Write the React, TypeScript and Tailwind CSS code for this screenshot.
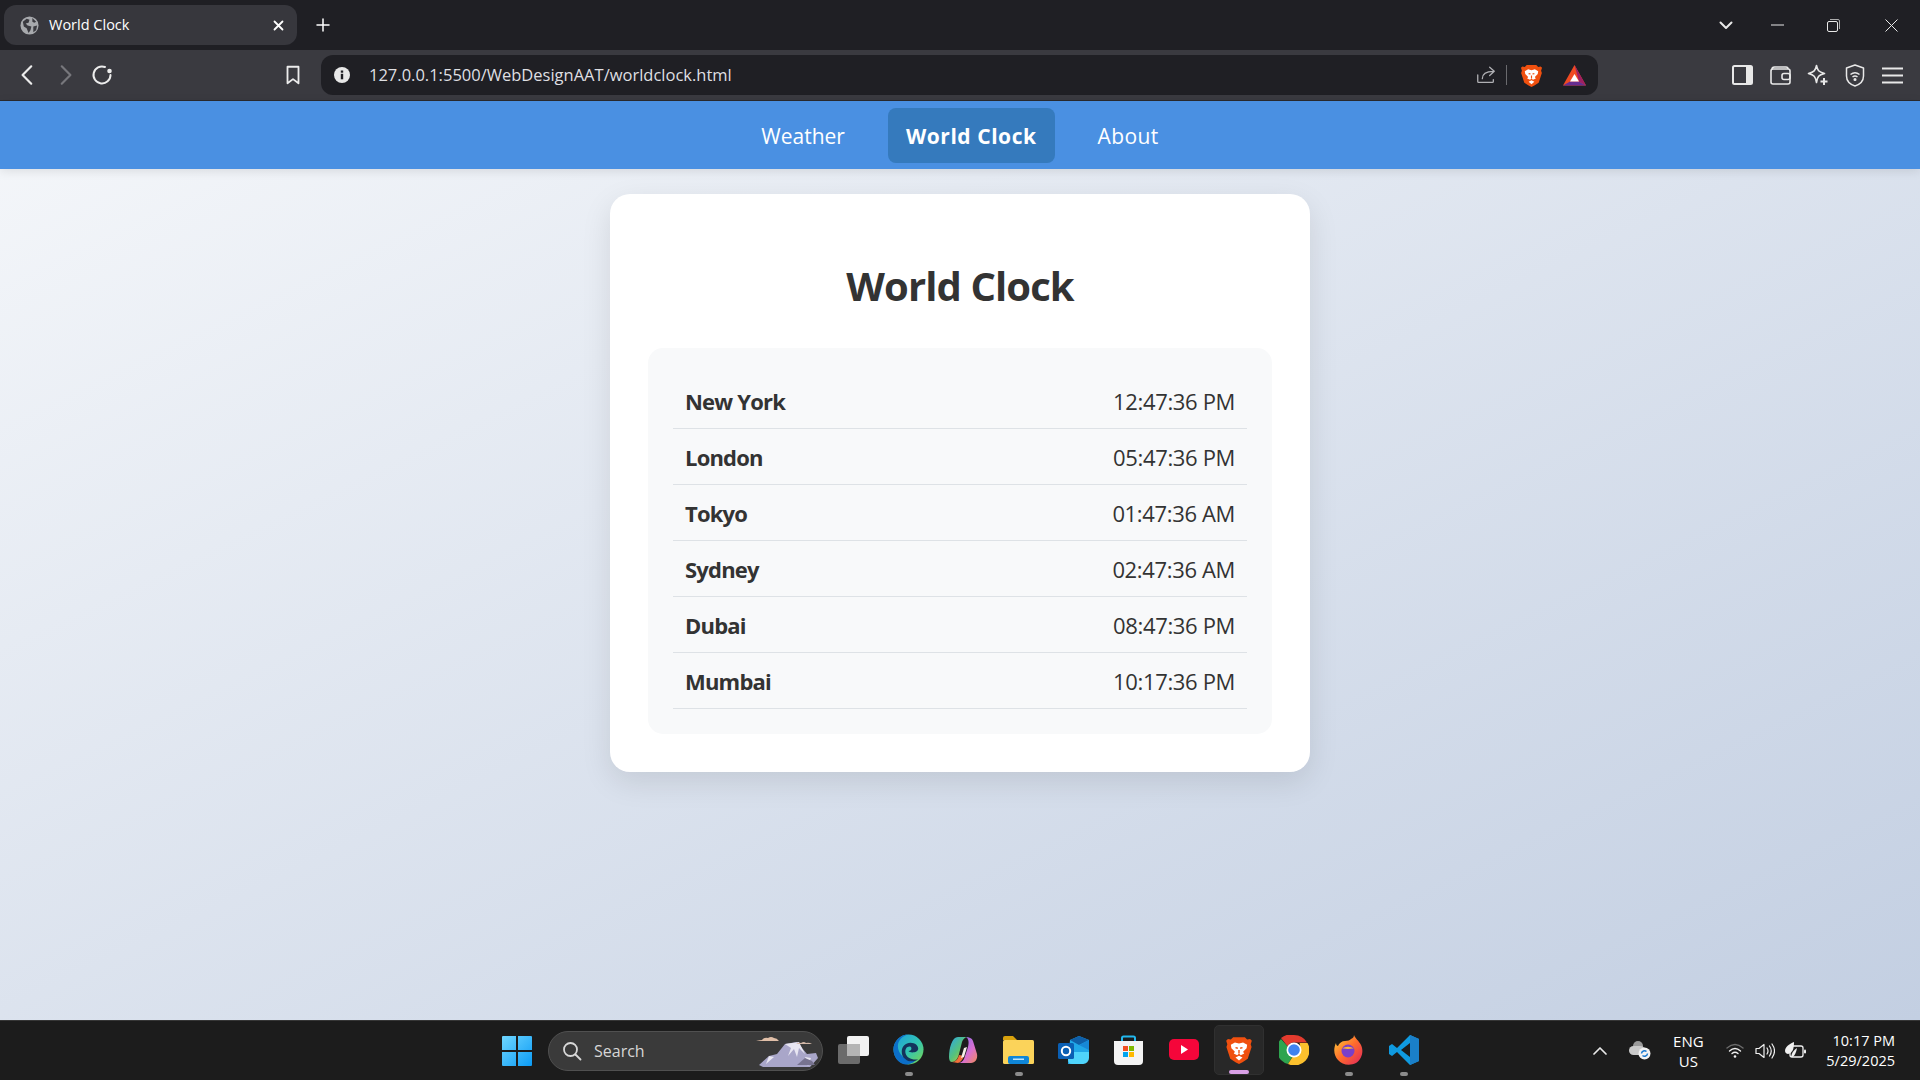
const clocks = [
  { city: "New York", time: "12:47:36 PM" },
  { city: "London", time: "05:47:36 PM" },
  { city: "Tokyo", time: "01:47:36 AM" },
  { city: "Sydney", time: "02:47:36 AM" },
  { city: "Dubai", time: "08:47:36 PM" },
  { city: "Mumbai", time: "10:17:36 PM" },
];

const ui = "font-['Open_Sans',sans-serif]";

function Line({ size = 20, children, className = "" }: { size?: number; children: React.ReactNode; className?: string }) {
  return (
    <svg width={size} height={size} viewBox="0 0 24 24" fill="none" stroke="currentColor" strokeWidth="2" strokeLinecap="round" strokeLinejoin="round" className={className}>
      {children}
    </svg>
  );
}

function BraveLogo({ size = 24 }: { size?: number }) {
  return (
    <svg width={size} height={size} viewBox="0 0 24 24">
      <path d="M7 1h10l2 2 2.500-.5L23 4l-1 3 .8 2.500-3.300 10L15 22.500 12 24l-3-1.500L4.500 19.500 1.200 9.500 2 7 1 4l1.500-1.500L5 3z" fill="#f0500f" />
      <path d="M5 7.500 8.500 5.500 12 6.500l3.500-1L19 7.500l-.5 3-3 3 1 1.500-3 1.500L12 15l-1.500 1.500-3-1.500 1-1.500-3-3z" fill="#fff" />
      <path d="M9 10l2 .5M15 10l-2 .5M12 12v3" stroke="#f0500f" strokeWidth="1.200" />
      <path d="M9 18.500 12 17l3 1.500-3 2.500z" fill="#fff" />
    </svg>
  );
}

function SearchMountains() {
  return (
    <svg width="64" height="32" viewBox="0 0 64 32" className="mr-[3px]">
      <path d="M4 30 14 21l8-2L30 9l12-2 10 12 9-1 2 5-8 9H8z" fill="#a9a6c9" />
      <path d="M30 9l6 4-3 8 6-7 3 8 2-9 6 6-6-12zM14 21l5 1-8 7zM50 22l6 1-3 8z" fill="#e8e6f2" />
      <path d="M42 30l8-7 7 3 3 4z" fill="#77738f" />
      <path d="M1 6q4-1 6-1 2-3 6-2 3-2 6 0 3 0 5 3H1z" fill="#e0bfa8" />
      <path d="M41 9q3-2 5-1 3-2 5 0 3-1 6 1z" fill="#d3b8a8" />
    </svg>
  );
}

function ChromeTile({ children, dot = false }: { children: React.ReactNode; dot?: boolean }) {
  return (
    <div className="relative flex h-[50px] w-[55px] items-center justify-center">
      {children}
      {dot && <span className="absolute bottom-[-1px] h-[4px] w-[8px] rounded-full bg-[#8c8c8c]" />}
    </div>
  );
}

export default function App() {
  return (
    <div className={`${ui} flex h-screen w-full flex-col overflow-hidden bg-[#1c1c1c]`}>
      {/* tab strip */}
      <div className="flex h-[50px] shrink-0 items-center bg-[#1f1f24] pl-[4px] text-white">
        <div className="flex h-[40px] w-[293px] items-center rounded-[12px] bg-[#37373d] pl-[16px] pr-[13px]">
          <svg width="19" height="19" viewBox="0 0 20 20">
            <circle cx="10" cy="10" r="9.500" fill="#a7a9ad" />
            <path d="M3 6l4-3 3 1-1 3-3 1 2 2 4 1-1 4-2 3-2-5-3-2zM13 2l4 4-2 1-2-1zM14 11l4-1-1 5-3 2z" fill="#3a3a40" />
          </svg>
          <span className="ml-[10px] flex-1 text-[14.5px]">World Clock</span>
          <svg width="11" height="11" viewBox="0 0 11 11" stroke="#fff" strokeWidth="1.800" strokeLinecap="round">
            <path d="M1.500 1.500l8 8M9.500 1.500l-8 8" />
          </svg>
        </div>
        <svg width="14" height="14" viewBox="0 0 14 14" stroke="#fff" strokeWidth="1.500" strokeLinecap="round" className="ml-[19px]">
          <path d="M7 1v12M1 7h12" />
        </svg>
        <div className="ml-auto flex items-center text-[#e8e8e8]">
          <svg width="14" height="9" viewBox="0 0 14 9" fill="none" stroke="currentColor" strokeWidth="2" strokeLinecap="round" strokeLinejoin="round" className="mr-[38px]">
            <path d="M1.500 1.500 7 7l5.500-5.500" />
          </svg>
          <svg width="13" height="2" viewBox="0 0 13 2" stroke="currentColor" className="mr-[43px]"><path d="M0 1h13" /></svg>
          <svg width="13" height="13" viewBox="0 0 13 13" fill="none" stroke="currentColor" className="mr-[45px]">
            <rect x=".5" y="2.500" width="10" height="10" rx="1.500" />
            <path d="M3 .5h8a1.500 1.500 0 0 1 1.500 1.500v8" opacity=".7" />
          </svg>
          <svg width="13" height="13" viewBox="0 0 13 13" stroke="currentColor" className="mr-[22px]"><path d="M.5.5l12 12M12.500.5l-12 12" /></svg>
        </div>
      </div>

      {/* toolbar */}
      <div className="flex h-[51px] shrink-0 items-center border-b border-[#2a2a2e] bg-[#3a3a40] text-[#ececec]">
        <Line size={26} className="ml-[15px]"><path d="M15 4 7 12l8 8" /></Line>
        <Line size={26} className="ml-[11px] text-[#77777c]"><path d="M9 4l8 8-8 8" /></Line>
        <Line size={24} className="ml-[12px]">
          <path d="M20.500 12A8.500 8.500 0 1 1 15 4" />
          <circle cx="19.500" cy="8" r="1.300" fill="currentColor" />
        </Line>
        <Line size={22} className="ml-[168px]" ><path d="M6 3h12v18l-6-4.500L6 21z" /></Line>
        <div className="ml-[17px] flex h-[40px] w-[1277px] items-center rounded-[12px] bg-[#1f1f24] pl-[13px] pr-[12px]">
          <svg width="16" height="16" viewBox="0 0 16 16">
            <circle cx="8" cy="8" r="8" fill="#e8e8e8" />
            <rect x="6.800" y="6.800" width="2.400" height="5.500" fill="#1f1f24" />
            <rect x="6.800" y="3.500" width="2.400" height="2.200" fill="#1f1f24" />
          </svg>
          <span className="ml-[19px] pt-[1px] text-[16.5px] text-[#dfdfe2]">127.0.0.1:5500/WebDesignAAT/worldclock.html</span>
          <div className="ml-auto flex items-center">
            <Line size={22} className="text-[#b0b0b4]">
              <path d="M3 12v7a1 1 0 0 0 1 1h15a1 1 0 0 0 1-1v-2" strokeWidth="1.400" />
              <path d="M8 16c0-5 4-8 12-8M16 3.500 21 8l-5 4.500" strokeWidth="1.400" />
            </Line>
            <span className="ml-[9px] h-[20px] w-px bg-[#6a6a6e]" />
            <span className="ml-[13px]"><BraveLogo size={23} /></span>
            <svg width="23" height="21" viewBox="0 0 23 21" className="ml-[20px]">
              <path d="M11.500 0 23 20.500H0z" fill="#f04a22" />
              <path d="M11.500 0 23 20.500l-7-4z" fill="#9e1f63" />
              <path d="M0 20.500h23l-7-4H7z" fill="#662d91" />
              <path d="M11.500 9 16 16.500H7z" fill="#fff" />
            </svg>
          </div>
        </div>
        <div className="ml-[134px] flex items-center">
          <svg width="21" height="20" viewBox="0 0 21 20" fill="none" stroke="#e8e8e8" strokeWidth="2">
            <rect x="1" y="1" width="19" height="18" rx="1.500" />
            <rect x="14" y="2" width="5" height="16" fill="#e8e8e8" stroke="none" />
          </svg>
          <svg width="21" height="20" viewBox="0 0 21 20" fill="none" stroke="#e8e8e8" strokeWidth="1.600" className="ml-[17px]">
            <path d="M2 4.500A2.500 2.500 0 0 1 4.500 2H16a2 2 0 0 1 2 2" />
            <rect x="1" y="4" width="19" height="15" rx="2" />
            <rect x="12" y="8.500" width="8" height="6" rx="2" />
          </svg>
          <svg width="22" height="22" viewBox="0 0 22 22" fill="none" stroke="#e8e8e8" strokeWidth="1.600" className="ml-[16px]">
            <path d="M9.500 1.500c1 5 2 6.500 8 8-6 1.500-7 3-8 9-1-6-2.500-7.500-8-9 5.500-1.500 7-3 8-8z" strokeLinejoin="round" />
            <path d="M17 14v7M13.500 17.500h7" strokeWidth="2" />
          </svg>
          <svg width="20" height="23" viewBox="0 0 20 23" fill="none" stroke="#e8e8e8" strokeWidth="1.500" className="ml-[16px]">
            <path d="M10 1l8.500 3v8c0 5-4 8.500-8.500 10C5.500 20.500 1.500 17 1.500 12V4z" strokeLinejoin="round" />
            <path d="M5.500 10.500q4.500-3.500 9 0M7.500 13q2.500-2 5 0" />
            <circle cx="10" cy="15.500" r=".8" fill="#e8e8e8" />
          </svg>
          <svg width="21" height="17" viewBox="0 0 21 17" stroke="#e8e8e8" strokeWidth="1.800" className="ml-[17px]">
            <path d="M0 1.500h21M0 8.500h21M0 15.500h21" />
          </svg>
        </div>
      </div>

      {/* page */}
      <div className="flex min-h-0 flex-1 flex-col bg-gradient-to-br from-[#f5f7fa] to-[#c3cfe2] font-['Open_Sans',sans-serif]">
        <nav className="flex h-[68px] shrink-0 items-center justify-center gap-[25px] bg-[#4a90e2] text-[21px] text-white shadow-[0_2px_10px_rgba(0,0,0,0.1)]">
          <a className="flex h-[55px] items-center rounded-[8px] px-[18px] pt-[3px]">Weather</a>
          <a className="flex h-[55px] items-center rounded-[8px] bg-[#357abd] px-[18px] pt-[3px] font-bold tracking-[0.55px]">World Clock</a>
          <a className="flex h-[55px] items-center rounded-[8px] px-[18px] pt-[3px] tracking-[0.4px]">About</a>
        </nav>
        <main className="flex justify-center pt-[25px]">
          <section className="w-[700px] rounded-[20px] bg-white px-[38px] pb-[38px] pt-[64px] shadow-[0_10px_30px_rgba(0,0,0,0.1)]">
            <h1 className="mb-[34px] text-center text-[40px] leading-[56px] font-bold tracking-[-0.9px] text-[#333333]">World Clock</h1>
            <div className="rounded-[15px] bg-[#f8f9fa] p-[25px]">
              {clocks.map((c) => (
                <div key={c.city} className="flex h-[56px] items-center justify-between border-b border-[#dee2e6] px-[12px] pt-[1px] text-[22px] text-[#333333]">
                  <span className="font-bold tracking-[-0.8px]">{c.city}</span>
                  <span className="tracking-[-0.35px]">{c.time}</span>
                </div>
              ))}
            </div>
          </section>
        </main>
      </div>

      {/* taskbar */}
      <div className="flex h-[60px] shrink-0 items-center border-t border-[#363636] bg-[#1c1c1c] text-white">
        <svg width="30" height="30" viewBox="0 0 30 30" className="ml-[502px]">
          <defs>
            <linearGradient id="win" x1="0" y1="0" x2="1" y2="1">
              <stop offset="0" stopColor="#6fd6ff" />
              <stop offset="1" stopColor="#0b9bf5" />
            </linearGradient>
          </defs>
          <path d="M0 1a1 1 0 0 1 1-1h13v14H0zM16 0h13a1 1 0 0 1 1 1v13H16zM0 16h14v14H1a1 1 0 0 1-1-1zM16 16h14v13a1 1 0 0 1-1 1H16z" fill="url(#win)" />
        </svg>
        <div className="ml-[16px] flex h-[40px] w-[275px] items-center justify-between rounded-full border border-[#505050] bg-[#3a3a3a] pl-[13px]">
          <div className="flex items-center">
            <svg width="20" height="20" viewBox="0 0 20 20" fill="none" stroke="#d8d8d8" strokeWidth="1.800" strokeLinecap="round">
              <circle cx="8.500" cy="8.500" r="6.500" />
              <path d="M13.500 13.500 18.500 18.500" />
            </svg>
            <span className="ml-[12px] text-[16px] text-[#d6d6d6]">Search</span>
          </div>
          <SearchMountains />
        </div>
        <div className="ml-[3px] flex items-center pb-[2px]">
          <ChromeTile>
            <svg width="31" height="28" viewBox="0 0 31 28">
              <rect x="0" y="8" width="22" height="20" rx="2" fill="#6b6b6b" />
              <rect x="9" y="0" width="22" height="20" rx="2" fill="#f2f2f2" />
              <rect x="9" y="8" width="13" height="12" fill="#b4b4b4" />
            </svg>
          </ChromeTile>
          <ChromeTile dot>
            <svg width="31" height="31" viewBox="0 0 32 32">
              <defs>
                <linearGradient id="edge" x1="0" y1="0" x2="1" y2="1">
                  <stop offset="0" stopColor="#1b9de2" />
                  <stop offset=".55" stopColor="#33c6b0" />
                  <stop offset="1" stopColor="#7fd64a" />
                </linearGradient>
              </defs>
              <circle cx="16" cy="16" r="15.500" fill="url(#edge)" />
              <path d="M.5 16C.5 7 8 .5 16 .5c-6 1-11 6-11 12 0 8 7 15 18 15-3 2.500-6 4-10 4C6 31 .5 24 .5 16z" fill="#0c6fc9" />
              <path d="M9 18c0-5 4-9 9-9 5 0 8 3 8 6 0 3-3 4-6 4-2 0-3-.5-4-1.500 2 0 3-1 3-2.500 0-1.500-1-2-2-2-3 0-5 3-4 7 1 4 6 7 13 6-4 3-10 3-13 0-3-2-4-5-4-8z" fill="#14335c" />
            </svg>
          </ChromeTile>
          <ChromeTile>
            <svg width="29" height="27" viewBox="0 0 29 27">
              <defs>
                <linearGradient id="copA" x1="0" y1="0" x2="1" y2="1">
                  <stop offset="0" stopColor="#2aa7e8" />
                  <stop offset=".5" stopColor="#57c27a" />
                  <stop offset="1" stopColor="#f5c518" />
                </linearGradient>
                <linearGradient id="copB" x1="0" y1="0" x2="1" y2="1">
                  <stop offset="0" stopColor="#7c6df2" />
                  <stop offset=".6" stopColor="#d86fd0" />
                  <stop offset="1" stopColor="#f08a5a" />
                </linearGradient>
              </defs>
              <path d="M9 1h10c-3 0-5 2-6 5l-3 12c-1 4-3 8-7 8-2 0-3-2-3-5C0 12 3 1 9 1z" fill="url(#copA)" />
              <path d="M17 1c3 0 6 1 7 4l4 13c1 5-2 9-6 9H9c4 0 6-3 7-7l3-9c1-4 1-8-2-10z" fill="url(#copB)" />
              <path d="M3 26c4 0 6-3 7-7l5 1c-1 3-3 6-6 7z" fill="#f0703a" />
              <path d="M15 12l3-1-3 10-3 1z" fill="#f3f0e8" />
            </svg>
          </ChromeTile>
          <ChromeTile dot>
            <svg width="31" height="28" viewBox="0 0 31 28">
              <path d="M0 2a2 2 0 0 1 2-2h8l4 4h-14z" fill="#d9a20d" />
              <rect x="0" y="4" width="31" height="24" rx="1.500" fill="#fbd35a" />
              <rect x="5" y="20" width="21" height="8" rx="2" fill="#0f86d8" />
              <rect x="10" y="22.500" width="11" height="1.500" fill="#bfe3fb" />
            </svg>
          </ChromeTile>
          <ChromeTile>
            <svg width="31" height="28" viewBox="0 0 31 28">
              <path d="M12 4 21 0l10 4v16l-6 8H10z" fill="#20a7e8" />
              <path d="M21 0l10 4-10 5-9-5z" fill="#0f5fa8" />
              <path d="M21 9l10-5v10l-10-5z" fill="#1788d6" />
              <path d="M10 16h21v6a6 6 0 0 1-6 6H14a4 4 0 0 1-4-4z" fill="#4fd4fb" />
              <rect x="0" y="7" width="16" height="16" rx="1.500" fill="#0a5fb4" />
              <circle cx="8" cy="15" r="4.200" fill="none" stroke="#fff" strokeWidth="2" />
            </svg>
          </ChromeTile>
          <ChromeTile>
            <svg width="29" height="30" viewBox="0 0 29 30">
              <path d="M8 6V3a1.500 1.500 0 0 1 1.500-1.500h10A1.500 1.500 0 0 1 21 3v3" fill="none" stroke="#22b8ee" strokeWidth="2" />
              <path d="M0 6h29v20a4 4 0 0 1-4 4H4a4 4 0 0 1-4-4z" fill="#f4f4f4" />
              <rect x="9" y="11" width="5" height="5" fill="#f25022" />
              <rect x="15" y="11" width="5" height="5" fill="#7fba00" />
              <rect x="9" y="17" width="5" height="5" fill="#00a4ef" />
              <rect x="15" y="17" width="5" height="5" fill="#ffb900" />
            </svg>
          </ChromeTile>
          <ChromeTile>
            <svg width="30" height="21" viewBox="0 0 30 21">
              <rect width="30" height="21" rx="5" fill="#f5063a" />
              <path d="M12 6l7 4.500-7 4.500z" fill="#fff" />
            </svg>
          </ChromeTile>
          <div className="relative flex h-[50px] w-[50px] mx-[2.500px] items-center justify-center rounded-[5px] border border-[#303030] bg-[#282828]">
            <BraveLogo size={28} />
            <span className="absolute bottom-[0px] h-[4px] w-[20px] rounded-full bg-[#d9a0e6]" />
          </div>
          <ChromeTile>
            <svg width="30" height="30" viewBox="0 0 30 30">
              <path d="M15 0a15 15 0 0 1 13 7.500H15a7.500 7.500 0 0 0-6.500 3.800L2 3A15 15 0 0 1 15 0z" fill="#e33b2e" />
              <path d="M2 4a15 15 0 0 0 7 25l6-10a7.500 7.500 0 0 1-6.500-7.700z" fill="#2ea44f" />
              <path d="M28.500 8A15 15 0 0 1 9 29l7-11a7.500 7.500 0 0 0 4.500-10z" fill="#fbc02d" />
              <circle cx="15" cy="15" r="7.500" fill="#fff" />
              <circle cx="15" cy="15" r="5.800" fill="#3f83f0" />
            </svg>
          </ChromeTile>
          <ChromeTile dot>
            <svg width="29" height="30" viewBox="0 0 29 30">
              <defs>
                <linearGradient id="fx" x1="0" y1="0" x2="1" y2="1">
                  <stop offset="0" stopColor="#ffd43a" />
                  <stop offset=".5" stopColor="#ff6b2c" />
                  <stop offset="1" stopColor="#e0245e" />
                </linearGradient>
              </defs>
              <path d="M20 0c1 3 5 6 7 10 3 6 1 14-5 18-6 3-14 2-18-3C0 21-1 14 2 8c0 2 1 3 2 3 1-3 4-5 7-5 3 0 5-1 6-2 2-1 3-2 3-4z" fill="url(#fx)" />
              <circle cx="14" cy="16" r="6.500" fill="#7a3fc8" />
              <path d="M8 14c3-3 9-3 12 0-2-1-4 0-6 0s-4-1-6 0z" fill="#ffb33a" />
            </svg>
          </ChromeTile>
          <ChromeTile dot>
            <svg width="30" height="30" viewBox="0 0 30 30">
              <path d="M21 0l9 4v22l-9 4L8 17l-5 4-3-2v-8l3-2 5 4z" fill="#0f9ae0" />
              <path d="M21 0l9 4v22l-9 4z" fill="#1a7fc8" />
              <path d="M21 8v14l-9-7z" fill="#1c1c1c" />
            </svg>
          </ChromeTile>
        </div>

        {/* tray */}
        <div className="ml-auto flex items-center pr-[25px]">
          <svg width="14" height="9" viewBox="0 0 14 9" fill="none" stroke="#e8e8e8" strokeWidth="1.700" strokeLinecap="round" strokeLinejoin="round">
            <path d="M1 8l6-6 6 6" />
          </svg>
          <svg width="22" height="19" viewBox="0 0 22 19" className="ml-[22px]">
            <circle cx="9" cy="5" r="5" fill="#9a9a9a" />
            <rect x="0" y="5" width="16" height="9" rx="4.500" fill="#c9c9c9" />
            <circle cx="15.500" cy="12.500" r="6" fill="#f2f2f2" />
            <path d="M12.500 12.500a3 3 0 0 1 5-2M18.500 12.500a3 3 0 0 1-5 2" fill="none" stroke="#1878d0" strokeWidth="1.500" />
          </svg>
          <div className="ml-[13px] flex w-[48px] flex-col items-center text-[15px] leading-[20px]">
            <span>ENG</span>
            <span>US</span>
          </div>
          <svg width="18" height="16" viewBox="0 0 18 16" fill="none" strokeLinecap="round" className="ml-[14px]">
            <path d="M1 5q8-7 16 0" stroke="#6b6b6b" strokeWidth="1.400" />
            <path d="M3.500 8q5.500-5 11 0M6 10.500q3-2.500 6 0" stroke="#f0f0f0" strokeWidth="1.400" />
            <circle cx="9" cy="13.500" r="1.300" fill="#f0f0f0" />
          </svg>
          <svg width="20" height="18" viewBox="0 0 20 18" fill="none" stroke="#f0f0f0" strokeWidth="1.200" className="ml-[11px]">
            <path d="M1 6.500h3L9 2.500v13L4 11.500H1z" strokeLinejoin="round" />
            <path d="M12 6q2 3 0 6M14.500 4q3.500 5 0 10M17 2q5 7 0 14" strokeLinecap="round" />
          </svg>
          <svg width="21" height="18" viewBox="0 0 21 18" className="ml-[10px]">
            <rect x="5" y="4" width="13" height="11" rx="2" fill="none" stroke="#f0f0f0" strokeWidth="1.300" />
            <rect x="19" y="7.500" width="2" height="4" rx="1" fill="#f0f0f0" />
            <path d="M0 9c0-4 4-7 9-9 0 6-1 11-6 12-1 0-3-1-3-3z" fill="#f0f0f0" />
            <path d="M6 15q1-6 6-9-1 6-4 9z" fill="#f0f0f0" />
          </svg>
          <div className="ml-[20px] flex flex-col items-end text-[14.5px] leading-[20px]">
            <span>10:17 PM</span>
            <span>5/29/2025</span>
          </div>
        </div>
      </div>
    </div>
  );
}
